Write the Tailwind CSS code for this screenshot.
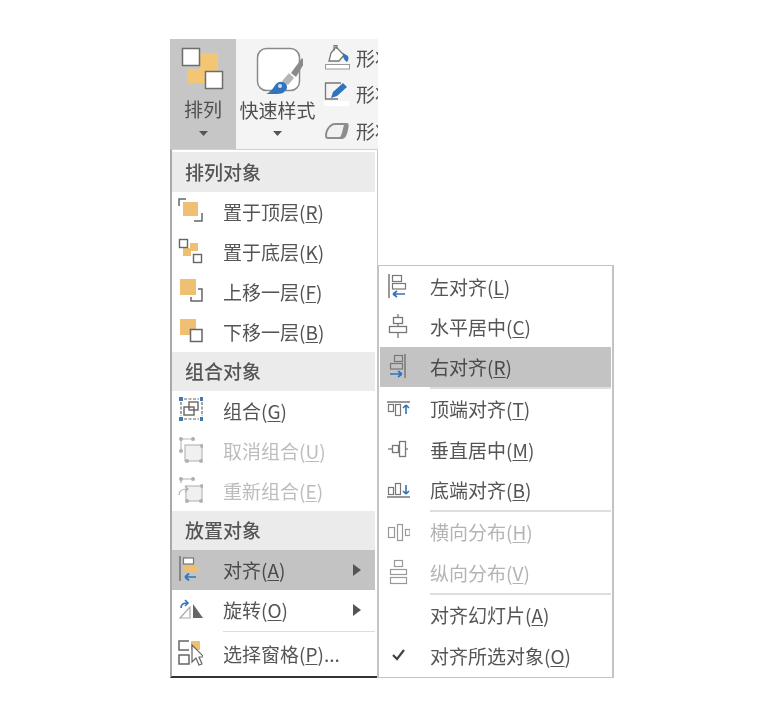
<!DOCTYPE html>
<html lang="zh-CN">
<head>
  <meta charset="UTF-8" />
  <title>排列</title>
  <script src="https://cdn.jsdelivr.net/npm/@tailwindcss/browser@4"></script>
</head>
<body class="bg-white">
  <div class="flex items-start pl-[170px] pt-[39px] w-[762px] h-[719px] overflow-hidden blur-[0.4px] text-[#555] text-[19px] leading-none font-['Noto_Sans_CJK_SC','Liberation_Sans',sans-serif]">

    <!-- 左列 -->
    <div class="w-[208px] shrink-0">
      <!-- 功能区 -->
      <div class="flex h-[110px] bg-[#f4f4f4] overflow-hidden">
        <div class="w-[66px] bg-[#c6c6c6] flex flex-col items-center pt-[8px] shrink-0">
          <svg width="44" height="44" viewBox="0 0 44 44">
            <rect x="19" y="6" width="18" height="20" fill="#f2c675"/>
            <rect x="6" y="22" width="19" height="14" fill="#f2c675"/>
            <rect x="1.500" y="1.500" width="17" height="17" fill="#fff" stroke="#6d6d6d" stroke-width="1.500"/>
            <rect x="24.500" y="24.500" width="17" height="17" fill="#fff" stroke="#6d6d6d" stroke-width="1.500"/>
          </svg>
          <span class="mt-[8px] text-[#4f4f4f]">排列</span>
          <svg class="mt-[13px]" width="9" height="5" viewBox="0 0 9 5"><path d="M0 0h9L4.500 5z" fill="#555"/></svg>
        </div>
        <div class="w-[88px] flex flex-col items-center pt-[8px] pr-[5px] shrink-0">
          <svg width="50" height="48" viewBox="0 0 50 48">
            <rect x="4.500" y="1.500" width="42" height="42" rx="9" fill="#fff" stroke="#8a8a8a" stroke-width="1.500"/>
            <path d="M38 26L49 11l3 4-9 15z" fill="#8a8a8a"/>
            <path d="M29 34l7-8 5 5-6 7z" fill="#b5b5b5"/>
            <path d="M13 47c5-2 7-6 10-10 3-3 8-3 10 0 2 3 1 6-2 8-2 2-5 2-18 2z" fill="#2f74bd"/>
            <circle cx="27" cy="39" r="2" fill="#cfe0f2"/>
          </svg>
          <span class="mt-[5px] whitespace-nowrap text-[#4f4f4f]">快速样式</span>
          <svg class="mt-[12px]" width="9" height="5" viewBox="0 0 9 5"><path d="M0 0h9L4.500 5z" fill="#555"/></svg>
        </div>
        <div class="flex flex-col w-[54px] shrink-0">
          <div class="flex items-center h-[36px]">
            <svg class="shrink-0" width="27" height="27" viewBox="0 0 27 27">
              <path d="M7 9l5-6 8 8-5 6H5z" fill="#fff" stroke="#777" stroke-width="1.300"/>
              <path d="M10 7V1.500h3V5" fill="none" stroke="#777" stroke-width="1.200"/>
              <path d="M19 9l5 3c1 3 0 5-1 6-2-1-3-3-4-5z" fill="#2f74bd"/>
              <rect x="1.500" y="20.500" width="24" height="4.500" fill="#fff" stroke="#999"/>
            </svg>
            <span class="ml-[5px] whitespace-nowrap text-[#4f4f4f]">形状填充</span>
          </div>
          <div class="flex items-center h-[36px]">
            <svg class="shrink-0" width="27" height="27" viewBox="0 0 27 27">
              <rect x="0" y="21" width="25" height="5" fill="#fff"/>
              <path d="M17 3H1.500v16H14" fill="none" stroke="#777" stroke-width="1.300"/>
              <path d="M7 18l2-6L19 3l4 4-10 9z" fill="#2f74bd"/>
            </svg>
            <span class="ml-[5px] whitespace-nowrap text-[#4f4f4f]">形状轮廓</span>
          </div>
          <div class="flex items-center h-[36px] mt-[1px]">
            <svg class="shrink-0" width="27" height="27" viewBox="0 0 27 27">
              <path d="M1 19C1 12 6 6 11 6h12c2 0 2 3 1 7-1 5-3 9-6 9H4c-2 0-3-1-3-3z" fill="#8d8d8d"/>
              <path d="M3 19c0-6 4-11 8-11h9c-1 3-2 10-4 12H5c-1 0-2 0-2-1z" fill="#f1f1f1"/>
            </svg>
            <span class="ml-[5px] whitespace-nowrap text-[#4f4f4f]">形状效果</span>
          </div>
        </div>
      </div>

      <!-- 排列菜单 -->
      <div class="h-[529px] border-l-2 border-r border-t border-l-[#a9a9a9] border-r-[#c9c9c9] border-t-[#d0d0d0] border-b-2 border-b-[#333] bg-white pr-[2px] pt-[2px]">
        <div class="h-[40px] pb-[2px] bg-[#ebebeb] flex items-center pl-[13px] font-medium">排列对象</div>

        <div class="h-[40px] pb-[2px] flex items-center">
          <svg class="ml-[5px] shrink-0" width="26" height="26" viewBox="0 0 26 26">
            <rect x="6" y="4" width="15" height="14" fill="#efc073"/>
            <path d="M2 8V1h7M17 23h8v-8" fill="none" stroke="#666" stroke-width="1.500"/>
          </svg>
          <span class="ml-[20px]">置于顶层(<u class="underline-offset-2">R</u>)</span>
        </div>
        <div class="h-[40px] pb-[2px] flex items-center">
          <svg class="ml-[5px] shrink-0" width="26" height="26" viewBox="0 0 26 26">
            <rect x="13" y="5" width="8" height="8" fill="#efc073"/>
            <rect x="6" y="10" width="8" height="8" fill="#efc073"/>
            <rect x="2.500" y="1.500" width="8" height="8" fill="#fff" stroke="#666" stroke-width="1.400"/>
            <rect x="16.500" y="16.500" width="8" height="8" fill="#fff" stroke="#666" stroke-width="1.400"/>
          </svg>
          <span class="ml-[20px]">置于底层(<u class="underline-offset-2">K</u>)</span>
        </div>
        <div class="h-[40px] pb-[2px] flex items-center">
          <svg class="ml-[5px] shrink-0" width="26" height="26" viewBox="0 0 26 26">
            <rect x="3" y="1" width="16" height="16" fill="#efc073"/>
            <path d="M21 11h4v12H14v-4" fill="none" stroke="#666" stroke-width="1.500"/>
          </svg>
          <span class="ml-[20px]">上移一层(<u class="underline-offset-2">F</u>)</span>
        </div>
        <div class="h-[40px] pb-[2px] flex items-center">
          <svg class="ml-[5px] shrink-0" width="26" height="26" viewBox="0 0 26 26">
            <rect x="3" y="1" width="16" height="16" fill="#efc073"/>
            <rect x="13.500" y="11.500" width="11.500" height="12" fill="#fff" stroke="#666" stroke-width="1.500"/>
          </svg>
          <span class="ml-[20px]">下移一层(<u class="underline-offset-2">B</u>)</span>
        </div>

        <div class="h-[39px] pb-[2px] bg-[#ebebeb] flex items-center pl-[13px] font-medium">组合对象</div>

        <div class="h-[40px] pb-[2px] flex items-center">
          <svg class="ml-[5px] shrink-0" width="26" height="26" viewBox="0 0 26 26">
            <path d="M4 5v14M7 2h15M7 22h15M25 5v14" fill="none" stroke="#666" stroke-width="1.200" stroke-dasharray="3 1.500"/>
            <rect x="12" y="5" width="9" height="8" fill="none" stroke="#666" stroke-width="1.400"/>
            <rect x="7" y="10" width="10" height="8" fill="none" stroke="#666" stroke-width="1.400"/>
            <g fill="#3d78b8">
              <rect x="2" y="0" width="4" height="4"/><rect x="23" y="0" width="4" height="4"/>
              <rect x="2" y="20" width="4" height="4"/><rect x="23" y="20" width="4" height="4"/>
            </g>
          </svg>
          <span class="ml-[20px]">组合(<u class="underline-offset-2">G</u>)</span>
        </div>
        <div class="h-[40px] pb-[2px] flex items-center text-[#bdbdbd]">
          <svg class="ml-[5px] shrink-0" width="26" height="26" viewBox="0 0 26 26">
            <rect x="8" y="8" width="17" height="16" fill="#f1eff1" stroke="#b9b9b9" stroke-width="1.200"/>
            <path d="M4 2h12M4 2v12" fill="none" stroke="#b9b9b9" stroke-width="1.200"/>
            <g fill="#b0b0b0">
              <circle cx="4" cy="2" r="2"/><circle cx="16" cy="2" r="2"/><circle cx="4" cy="14" r="2"/>
              <circle cx="25" cy="9" r="2"/><circle cx="10" cy="24" r="2"/><circle cx="24" cy="24" r="2"/>
            </g>
          </svg>
          <span class="ml-[20px]">取消组合(<u class="underline-offset-2">U</u>)</span>
        </div>
        <div class="h-[40px] pb-[2px] flex items-center text-[#bdbdbd]">
          <svg class="ml-[5px] shrink-0" width="26" height="26" viewBox="0 0 26 26">
            <rect x="9" y="9" width="16" height="15" fill="#f1eff1" stroke="#b9b9b9" stroke-width="1.200"/>
            <path d="M4 2h12M4 2v4M2 18c0-4 2-6 8-6M8 9l3 3-3 3" fill="none" stroke="#b0b0b0" stroke-width="1.200"/>
            <g fill="#b0b0b0">
              <circle cx="4" cy="2" r="2"/><circle cx="16" cy="2" r="2"/>
              <circle cx="25" cy="9" r="2"/><circle cx="10" cy="24" r="2"/><circle cx="24" cy="24" r="2"/>
            </g>
          </svg>
          <span class="ml-[20px]">重新组合(<u class="underline-offset-2">E</u>)</span>
        </div>

        <div class="h-[39px] pb-[2px] bg-[#ebebeb] flex items-center pl-[13px] font-medium">放置对象</div>

        <div class="h-[40px] pb-[2px] bg-[#c3c3c3] flex items-center relative text-[#4a4a4a]">
          <svg class="ml-[5px] shrink-0" width="26" height="26" viewBox="0 0 26 26">
            <path d="M3 0v25" stroke="#777" stroke-width="1.600"/>
            <rect x="6.500" y="2" width="10" height="6" fill="#fff" stroke="#777" stroke-width="1.200"/>
            <rect x="6" y="10" width="15" height="6" fill="#f0c070"/>
            <path d="M8 21h11M8 21l4-3.500M8 21l4 3.500" fill="none" stroke="#2f74bd" stroke-width="1.700"/>
          </svg>
          <span class="ml-[20px]">对齐(<u class="underline-offset-2">A</u>)</span>
          <svg class="absolute left-[181px] top-[14px]" width="8" height="12" viewBox="0 0 8 12"><path d="M0 0l8 6-8 6z" fill="#555"/></svg>
        </div>
        <div class="h-[41px] pb-[2px] flex items-center relative">
          <svg class="ml-[5px] shrink-0" width="26" height="26" viewBox="0 0 26 26">
            <path d="M3 21L13 10v11z" fill="#fff" stroke="#aaa" stroke-width="1.200"/>
            <path d="M16 7l10 14H16z" fill="#666"/>
            <path d="M4 11c0-3 2-5 6-5M8 3l3 3-3 3" fill="none" stroke="#2f74bd" stroke-width="1.600"/>
          </svg>
          <span class="ml-[20px]">旋转(<u class="underline-offset-2">O</u>)</span>
          <svg class="absolute left-[181px] top-[14px]" width="8" height="12" viewBox="0 0 8 12"><path d="M0 0l8 6-8 6z" fill="#555"/></svg>
        </div>
        <div class="ml-[51px] h-px bg-[#dedede]"></div>
        <div class="h-[44px] pb-[2px] flex items-center">
          <svg class="ml-[5px] shrink-0" width="26" height="26" viewBox="0 0 26 26">
            <path d="M12 1H2v9h10M2 15h10v9H2z" fill="#fff" stroke="#666" stroke-width="1.500"/>
            <rect x="14" y="1" width="9" height="9" fill="#efc073"/>
            <path d="M15 5v17l4-4 3 7 3-1-3-7h5z" fill="#fff" stroke="#666" stroke-width="1.200"/>
          </svg>
          <span class="ml-[20px]">选择窗格(<u class="underline-offset-2">P</u>)...</span>
        </div>
      </div>
    </div>

    <!-- 对齐子菜单 -->
    <div class="-ml-px mt-[226px] w-[237px] h-[413px] shrink-0 bg-white border border-[#c4c4c4] border-l-2 border-r-2 pl-px pr-px pt-[1px]">
      <div class="h-[40px] pb-[2px] flex items-center">
        <svg class="ml-[6px] shrink-0" width="24" height="26" viewBox="0 0 24 26">
          <path d="M3 1v24" stroke="#777" stroke-width="1.500"/>
          <rect x="6.500" y="2.500" width="9" height="6" fill="#fff" stroke="#777" stroke-width="1.200"/>
          <rect x="6.500" y="10.500" width="13" height="5.500" fill="#fff" stroke="#777" stroke-width="1.200"/>
          <path d="M7 21h12M7 21l4-3M7 21l4 3" fill="none" stroke="#2f74bd" stroke-width="1.600"/>
        </svg>
        <span class="ml-[20px]">左对齐(<u class="underline-offset-2">L</u>)</span>
      </div>
      <div class="h-[40px] pb-[2px] flex items-center">
        <svg class="ml-[6px] shrink-0" width="24" height="26" viewBox="0 0 24 26">
          <path d="M12 1v24" stroke="#777" stroke-width="1.300"/>
          <rect x="7.500" y="4.500" width="9" height="6" fill="#fff" stroke="#777" stroke-width="1.300"/>
          <rect x="3.500" y="13.500" width="17" height="6" fill="#fff" stroke="#777" stroke-width="1.300"/>
        </svg>
        <span class="ml-[20px]">水平居中(<u class="underline-offset-2">C</u>)</span>
      </div>
      <div class="h-[40px] pb-[2px] flex items-center bg-[#c3c3c3] text-[#4a4a4a]">
        <svg class="ml-[6px] shrink-0" width="24" height="26" viewBox="0 0 24 26">
          <path d="M19 1v24" stroke="#777" stroke-width="1.500"/>
          <rect x="8.500" y="2.500" width="8" height="6" fill="none" stroke="#777" stroke-width="1.200"/>
          <rect x="4.500" y="10.500" width="12" height="5.500" fill="none" stroke="#777" stroke-width="1.200"/>
          <path d="M4 21h12M16 21l-4-3M16 21l-4 3" fill="none" stroke="#2f74bd" stroke-width="1.600"/>
        </svg>
        <span class="ml-[20px]">右对齐(<u class="underline-offset-2">R</u>)</span>
      </div>
      <div class="ml-[50px] h-[2px] bg-[#dedede]"></div>

      <div class="h-[41px] pb-[2px] flex items-center">
        <svg class="ml-[6px] shrink-0" width="24" height="26" viewBox="0 0 24 26">
          <path d="M1 6h24" stroke="#777" stroke-width="1.500"/>
          <rect x="2.500" y="8.500" width="5" height="7" fill="#fff" stroke="#777" stroke-width="1.200"/>
          <rect x="9.500" y="8.500" width="5" height="11" fill="#fff" stroke="#777" stroke-width="1.200"/>
          <path d="M20 18V9M20 9l-3 3M20 9l3 3" fill="none" stroke="#2f74bd" stroke-width="1.600"/>
        </svg>
        <span class="ml-[20px]">顶端对齐(<u class="underline-offset-2">T</u>)</span>
      </div>
      <div class="h-[40px] pb-[2px] flex items-center">
        <svg class="ml-[6px] shrink-0" width="24" height="26" viewBox="0 0 24 26">
          <path d="M2 13h20" stroke="#777" stroke-width="1.300"/>
          <rect x="6.500" y="9.500" width="6" height="7" fill="#fff" stroke="#777" stroke-width="1.300"/>
          <rect x="13.500" y="5.500" width="6" height="15" fill="#fff" stroke="#777" stroke-width="1.300"/>
        </svg>
        <span class="ml-[20px]">垂直居中(<u class="underline-offset-2">M</u>)</span>
      </div>
      <div class="h-[40px] pb-[2px] flex items-center">
        <svg class="ml-[6px] shrink-0" width="24" height="26" viewBox="0 0 24 26">
          <path d="M1 21h24" stroke="#777" stroke-width="1.500"/>
          <rect x="2.500" y="11.500" width="5" height="7" fill="#fff" stroke="#777" stroke-width="1.200"/>
          <rect x="9.500" y="7.500" width="5" height="11" fill="#fff" stroke="#777" stroke-width="1.200"/>
          <path d="M20 9v9M20 18l-3-3M20 18l3-3" fill="none" stroke="#2f74bd" stroke-width="1.600"/>
        </svg>
        <span class="ml-[20px]">底端对齐(<u class="underline-offset-2">B</u>)</span>
      </div>
      <div class="ml-[50px] h-[2px] bg-[#dedede]"></div>

      <div class="h-[41px] pb-[2px] flex items-center text-[#b4b4b4]">
        <svg class="ml-[6px] shrink-0" width="24" height="26" viewBox="0 0 24 26">
          <rect x="2.500" y="8.500" width="6" height="10" fill="#fff" stroke="#999" stroke-width="1.200"/>
          <rect x="11.500" y="5.500" width="5" height="16" fill="#fff" stroke="#999" stroke-width="1.200"/>
          <rect x="19.500" y="10.500" width="4.500" height="6" fill="#fff" stroke="#999" stroke-width="1.200"/>
        </svg>
        <span class="ml-[20px]">横向分布(<u class="underline-offset-2">H</u>)</span>
      </div>
      <div class="h-[40px] pb-[2px] flex items-center text-[#b4b4b4]">
        <svg class="ml-[6px] shrink-0" width="24" height="26" viewBox="0 0 24 26">
          <rect x="8.500" y="1.500" width="8" height="6" fill="#fff" stroke="#999" stroke-width="1.200"/>
          <rect x="4.500" y="10.500" width="16" height="5" fill="#fff" stroke="#999" stroke-width="1.200"/>
          <rect x="4.500" y="18.500" width="16" height="6" fill="#fff" stroke="#999" stroke-width="1.200"/>
        </svg>
        <span class="ml-[20px]">纵向分布(<u class="underline-offset-2">V</u>)</span>
      </div>
      <div class="ml-[50px] h-[2px] bg-[#dedede]"></div>

      <div class="h-[41px] pb-[2px] flex items-center">
        <span class="ml-[50px]">对齐幻灯片(<u class="underline-offset-2">A</u>)</span>
      </div>
      <div class="h-[40px] pb-[2px] flex items-center">
        <svg class="ml-[6px] shrink-0" width="24" height="26" viewBox="0 0 24 26">
          <path d="M7 13l4 4 7-9" fill="none" stroke="#444" stroke-width="2.200"/>
        </svg>
        <span class="ml-[20px]">对齐所选对象(<u class="underline-offset-2">O</u>)</span>
      </div>
    </div>
  </div>
</body>
</html>
